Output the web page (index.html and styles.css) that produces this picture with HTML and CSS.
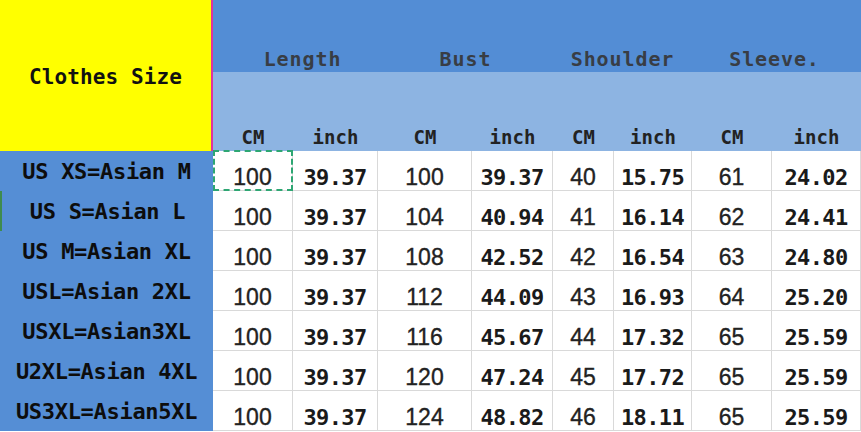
FILE: index.html
```html
<!DOCTYPE html>
<html>
<head>
<meta charset="utf-8">
<link rel="stylesheet" href="styles.css">
</head>
<body>
<div class="sheet">
  <div class="corner">Clothes Size</div>
  <div class="grp grp-len">Length</div>
  <div class="grp">Bust</div>
  <div class="grp">Shoulder</div>
  <div class="grp grp-sl">Sleeve.</div>

  <div class="unit">CM</div><div class="unit">inch</div>
  <div class="unit">CM</div><div class="unit">inch</div>
  <div class="unit">CM</div><div class="unit">inch</div>
  <div class="unit">CM</div><div class="unit">inch</div>

  <div class="lbl">US XS=Asian M</div>
  <div class="cm sel">100</div><div class="in">39.37</div><div class="cm">100</div><div class="in">39.37</div><div class="cm">40</div><div class="in">15.75</div><div class="cm">61</div><div class="in">24.02</div>

  <div class="lbl mark">US S=Asian L</div>
  <div class="cm">100</div><div class="in">39.37</div><div class="cm">104</div><div class="in">40.94</div><div class="cm">41</div><div class="in">16.14</div><div class="cm">62</div><div class="in">24.41</div>

  <div class="lbl">US M=Asian XL</div>
  <div class="cm">100</div><div class="in">39.37</div><div class="cm">108</div><div class="in">42.52</div><div class="cm">42</div><div class="in">16.54</div><div class="cm">63</div><div class="in">24.80</div>

  <div class="lbl">USL=Asian 2XL</div>
  <div class="cm">100</div><div class="in">39.37</div><div class="cm">112</div><div class="in">44.09</div><div class="cm">43</div><div class="in">16.93</div><div class="cm">64</div><div class="in">25.20</div>

  <div class="lbl">USXL=Asian3XL</div>
  <div class="cm">100</div><div class="in">39.37</div><div class="cm">116</div><div class="in">45.67</div><div class="cm">44</div><div class="in">17.32</div><div class="cm">65</div><div class="in">25.59</div>

  <div class="lbl">U2XL=Asian 4XL</div>
  <div class="cm">100</div><div class="in">39.37</div><div class="cm">120</div><div class="in">47.24</div><div class="cm">45</div><div class="in">17.72</div><div class="cm">65</div><div class="in">25.59</div>

  <div class="lbl">US3XL=Asian5XL</div>
  <div class="cm">100</div><div class="in">39.37</div><div class="cm">124</div><div class="in">48.82</div><div class="cm">46</div><div class="in">18.11</div><div class="cm">65</div><div class="in">25.59</div>
</div>
</body>
</html>
```

FILE: styles.css
```css
html, body {
  margin: 0;
  padding: 0;
  background: #ffffff;
}

.sheet {
  display: grid;
  grid-template-columns: 213px 80px 85px 94px 81px 61px 78px 80px 89px;
  grid-template-rows: 72px 79px repeat(7, 40px);
  width: 861px;
  height: 432px;
  overflow: hidden;
  font-family: "DejaVu Sans Mono", monospace;
}

.corner {
  grid-row: 1 / 3;
  grid-column: 1;
  background: #ffff00;
  border-right: 2px solid #e0349c;
  display: flex;
  align-items: center;
  justify-content: center;
  font-size: 21px;
  font-weight: bold;
  letter-spacing: 0.1px;
  color: #111111;
  padding-top: 2px;
  box-sizing: border-box;
}

.grp {
  grid-column: span 2;
  background: #538dd5;
  display: flex;
  align-items: flex-end;
  justify-content: center;
  font-size: 20px;
  font-weight: bold;
  letter-spacing: 0.9px;
  color: #383d45;
  padding-bottom: 3px;
  line-height: 1;
  box-sizing: border-box;
}

.grp-len {
  padding-left: 14px;
}

.grp-sl {
  padding-right: 4px;
}

.unit {
  background: #8db4e2;
  display: flex;
  align-items: flex-end;
  justify-content: center;
  font-size: 19px;
  font-weight: bold;
  color: #222222;
  line-height: 1;
  padding-bottom: 4px;
  box-sizing: border-box;
}

.lbl {
  background: #558ed5;
  display: flex;
  align-items: center;
  justify-content: center;
  font-size: 22px;
  font-weight: bold;
  letter-spacing: -0.3px;
  color: #0d0d0d;
  white-space: pre;
  line-height: 1;
  padding-top: 2px;
  box-sizing: border-box;
}

.mark {
  border-left: 2px solid #3f8b4e;
}

.cm, .in {
  display: flex;
  align-items: flex-end;
  justify-content: center;
  border-right: 1px solid #d9d9d9;
  border-bottom: 1px solid #d9d9d9;
  line-height: 1;
  padding-bottom: 1px;
  color: #262626;
  box-sizing: border-box;
}

.cm {
  font-family: "Liberation Sans", Arial, sans-serif;
  font-size: 23px;
  color: #222222;
  -webkit-text-stroke: 0.35px #222222;
}

.in {
  font-family: "DejaVu Sans Mono", monospace;
  font-size: 22px;
  font-weight: bold;
  letter-spacing: -0.6px;
  color: #1a1a1a;
}

.sel {
  position: relative;
}

.sel::after {
  content: "";
  position: absolute;
  left: 0;
  top: -1px;
  right: -1px;
  bottom: -1px;
  border: 2px dashed #2ea673;
}
```
